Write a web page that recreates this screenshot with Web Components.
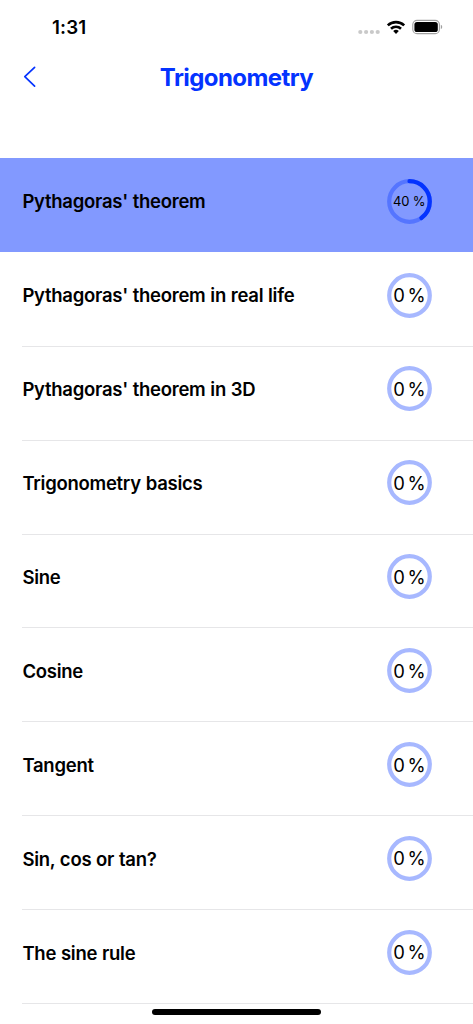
<!DOCTYPE html>
<html lang="en">
<head>
<meta charset="utf-8">
<meta name="viewport" content="width=device-width, initial-scale=1">
<title>Trigonometry</title>
<style>
  :root{
    --primary-color: #0433ff;
    --line-color: #e6e6e8;
  }

  body{
    margin: 0;
    background: #fff;
    color: #000;
    font-family: Inter, "Liberation Sans", sans-serif;
  }
</style>
</head>
<body>

<topic-screen>
  <status-bar slot="status" time="1:31"></status-bar>
  <nav-header slot="header">Trigonometry</nav-header>
  <topic-row progress="40" selected>Pythagoras' theorem</topic-row>
  <topic-row progress="0">Pythagoras' theorem in real life</topic-row>
  <topic-row progress="0">Pythagoras' theorem in 3D</topic-row>
  <topic-row progress="0">Trigonometry basics</topic-row>
  <topic-row progress="0">Sine</topic-row>
  <topic-row progress="0">Cosine</topic-row>
  <topic-row progress="0">Tangent</topic-row>
  <topic-row progress="0">Sin, cos or tan?</topic-row>
  <topic-row progress="0">The sine rule</topic-row>
</topic-screen>

<script>
class topicScreen extends HTMLElement{
    constructor(){
        super();
        this.attachShadow({ mode: "open" });
    }

    connectedCallback(){
        this.shadowRoot.innerHTML = `
        <style>
:host{
  display: flex;
  flex-direction: column;
  position: relative;
  height: 1024px;
  overflow: hidden;
}

.list{
  display: flex;
  flex-direction: column;
  padding-top: 58.4px;
}

.home-indicator{
  position: absolute;
  left: 152px;
  bottom: 9.3px;
  width: 169px;
  height: 5.7px;
  border-radius: 3px;
  background: #000;
}
        </style>

        <slot name="status"></slot>
        <slot name="header"></slot>
        <div class="list"><slot></slot></div>
        <div class="home-indicator"></div>
        `;
    }
}

class statusBar extends HTMLElement{
    constructor(){
        super();
        this.attachShadow({ mode: "open" });
    }

    connectedCallback(){
        const time = this.getAttribute("time");

        this.shadowRoot.innerHTML = `
        <style>
:host{
  display: flex;
  align-items: center;
  justify-content: space-between;
  box-sizing: border-box;
  height: 54px;
  padding: 0 30px 0 52px;
}

.time{
  font-size: 18.8px;
  font-weight: 600;
  letter-spacing: 0.1px;
}

svg{
  display: block;
}
        </style>

        <span class="time">${time}</span>
        <svg width="86" height="20" viewBox="357 17 86 20">
          <g fill="#c9c9c9">
            <circle cx="360.3" cy="32" r="2.1"/>
            <circle cx="366.1" cy="32" r="2.1"/>
            <circle cx="371.9" cy="32" r="2.1"/>
            <circle cx="377.7" cy="32" r="2.1"/>
          </g>
          <g fill="none" stroke="#000" stroke-width="2.6">
            <path d="M387.8 25.4a11.8 11.8 0 0 1 16.4 0"/>
            <path d="M391 28.7a7.2 7.2 0 0 1 10 0"/>
          </g>
          <path d="M396 33.9l-2.8-2.8a4 4 0 0 1 5.6 0z"/>
          <rect x="412.8" y="20.4" width="26.6" height="13.2" rx="4.2" fill="none" stroke="#a0a0a0" stroke-width="1.1"/>
          <rect x="414.4" y="22" width="23.4" height="10" rx="2.6"/>
          <path d="M440.8 24.8a2.4 2.4 0 0 1 0 4.4z" fill="#a0a0a0"/>
        </svg>
        `;
    }
}

class navHeader extends HTMLElement{
    constructor(){
        super();
        this.attachShadow({ mode: "open" });
    }

    connectedCallback(){
        this.shadowRoot.innerHTML = `
        <style>
:host{
  display: grid;
  grid-template-columns: 60px 1fr 60px;
  align-items: center;
  height: 46px;
  color: var(--primary-color);
}

.back{
  display: block;
  margin-left: 20px;
}

.title{
  padding-top: 2px;
  text-align: center;
  font-size: 24px;
  font-weight: 700;
  letter-spacing: -0.57px;
  line-height: 30px;
}
        </style>

        <svg class="back" width="20" height="26" viewBox="20 64 20 26">
          <path d="M34.6 67.3L24.8 76.7l9.8 9.5" fill="none" stroke="currentColor" stroke-width="1.7" stroke-linecap="round" stroke-linejoin="round"/>
        </svg>
        <div class="title"><slot></slot></div>
        `;
    }
}

class progressRing extends HTMLElement{
    constructor(){
        super();
        this.attachShadow({ mode: "open" });
    }

    connectedCallback(){
        const value = Number(this.getAttribute("value"));

        this.shadowRoot.innerHTML = `
        <style>
:host{
  display: grid;
  width: 45px;
  height: 45px;
  place-items: center;
}

svg, .label{
  grid-area: 1 / 1;
}

svg{
  display: block;
}

.label{
  font-size: ${value ? 13 : 18.4}px;
  letter-spacing: ${value ? "-0.15px" : "-0.5px"};
  word-spacing: ${value ? 0 : "-1.6px"};
  white-space: nowrap;
}
        </style>

        <svg width="45" height="45" viewBox="0 0 45 45" fill="none" stroke="var(--primary-color)" stroke-width="4.2">
          <circle cx="22.5" cy="22.5" r="20.3" stroke-opacity="0.35"/>
          ${value ? `<circle cx="22.5" cy="22.5" r="20.3" pathLength="100" stroke-dasharray="${value} 100" stroke-linecap="round" transform="rotate(-90 22.5 22.5)"/>` : ""}
        </svg>
        <span class="label">${value} %</span>
        `;
    }
}

class topicRow extends HTMLElement{
    constructor(){
        super();
        this.attachShadow({ mode: "open" });
    }

    connectedCallback(){
        const progress = this.getAttribute("progress");

        this.shadowRoot.innerHTML = `
        <style>
:host{
  display: block;
  height: 93.9px;
  padding-left: 22.4px;
}

:host([selected]){
  background: #8299ff;
}

/* the separator sits across the edge between two rows */
.row{
  display: flex;
  align-items: flex-start;
  justify-content: space-between;
  box-sizing: border-box;
  height: calc(100% + 0.6px);
  padding: 20.3px 41.3px 0 0;
  border-bottom: 1px solid var(--line-color);
}

:host([selected]) .row{
  border-bottom-color: transparent;
}

.name{
  padding-top: 0.8px;
  font-size: 18.5px;
  font-weight: 600;
  line-height: 45px;
  letter-spacing: -0.26px;
  word-spacing: 0.4px;
}
        </style>

        <div class="row">
          <span class="name"><slot></slot></span>
          <progress-ring value="${progress}"></progress-ring>
        </div>
        `;
    }
}

customElements.define("progress-ring", progressRing);
customElements.define("topic-row", topicRow);
customElements.define("nav-header", navHeader);
customElements.define("status-bar", statusBar);
customElements.define("topic-screen", topicScreen);
</script>
</body>
</html>
